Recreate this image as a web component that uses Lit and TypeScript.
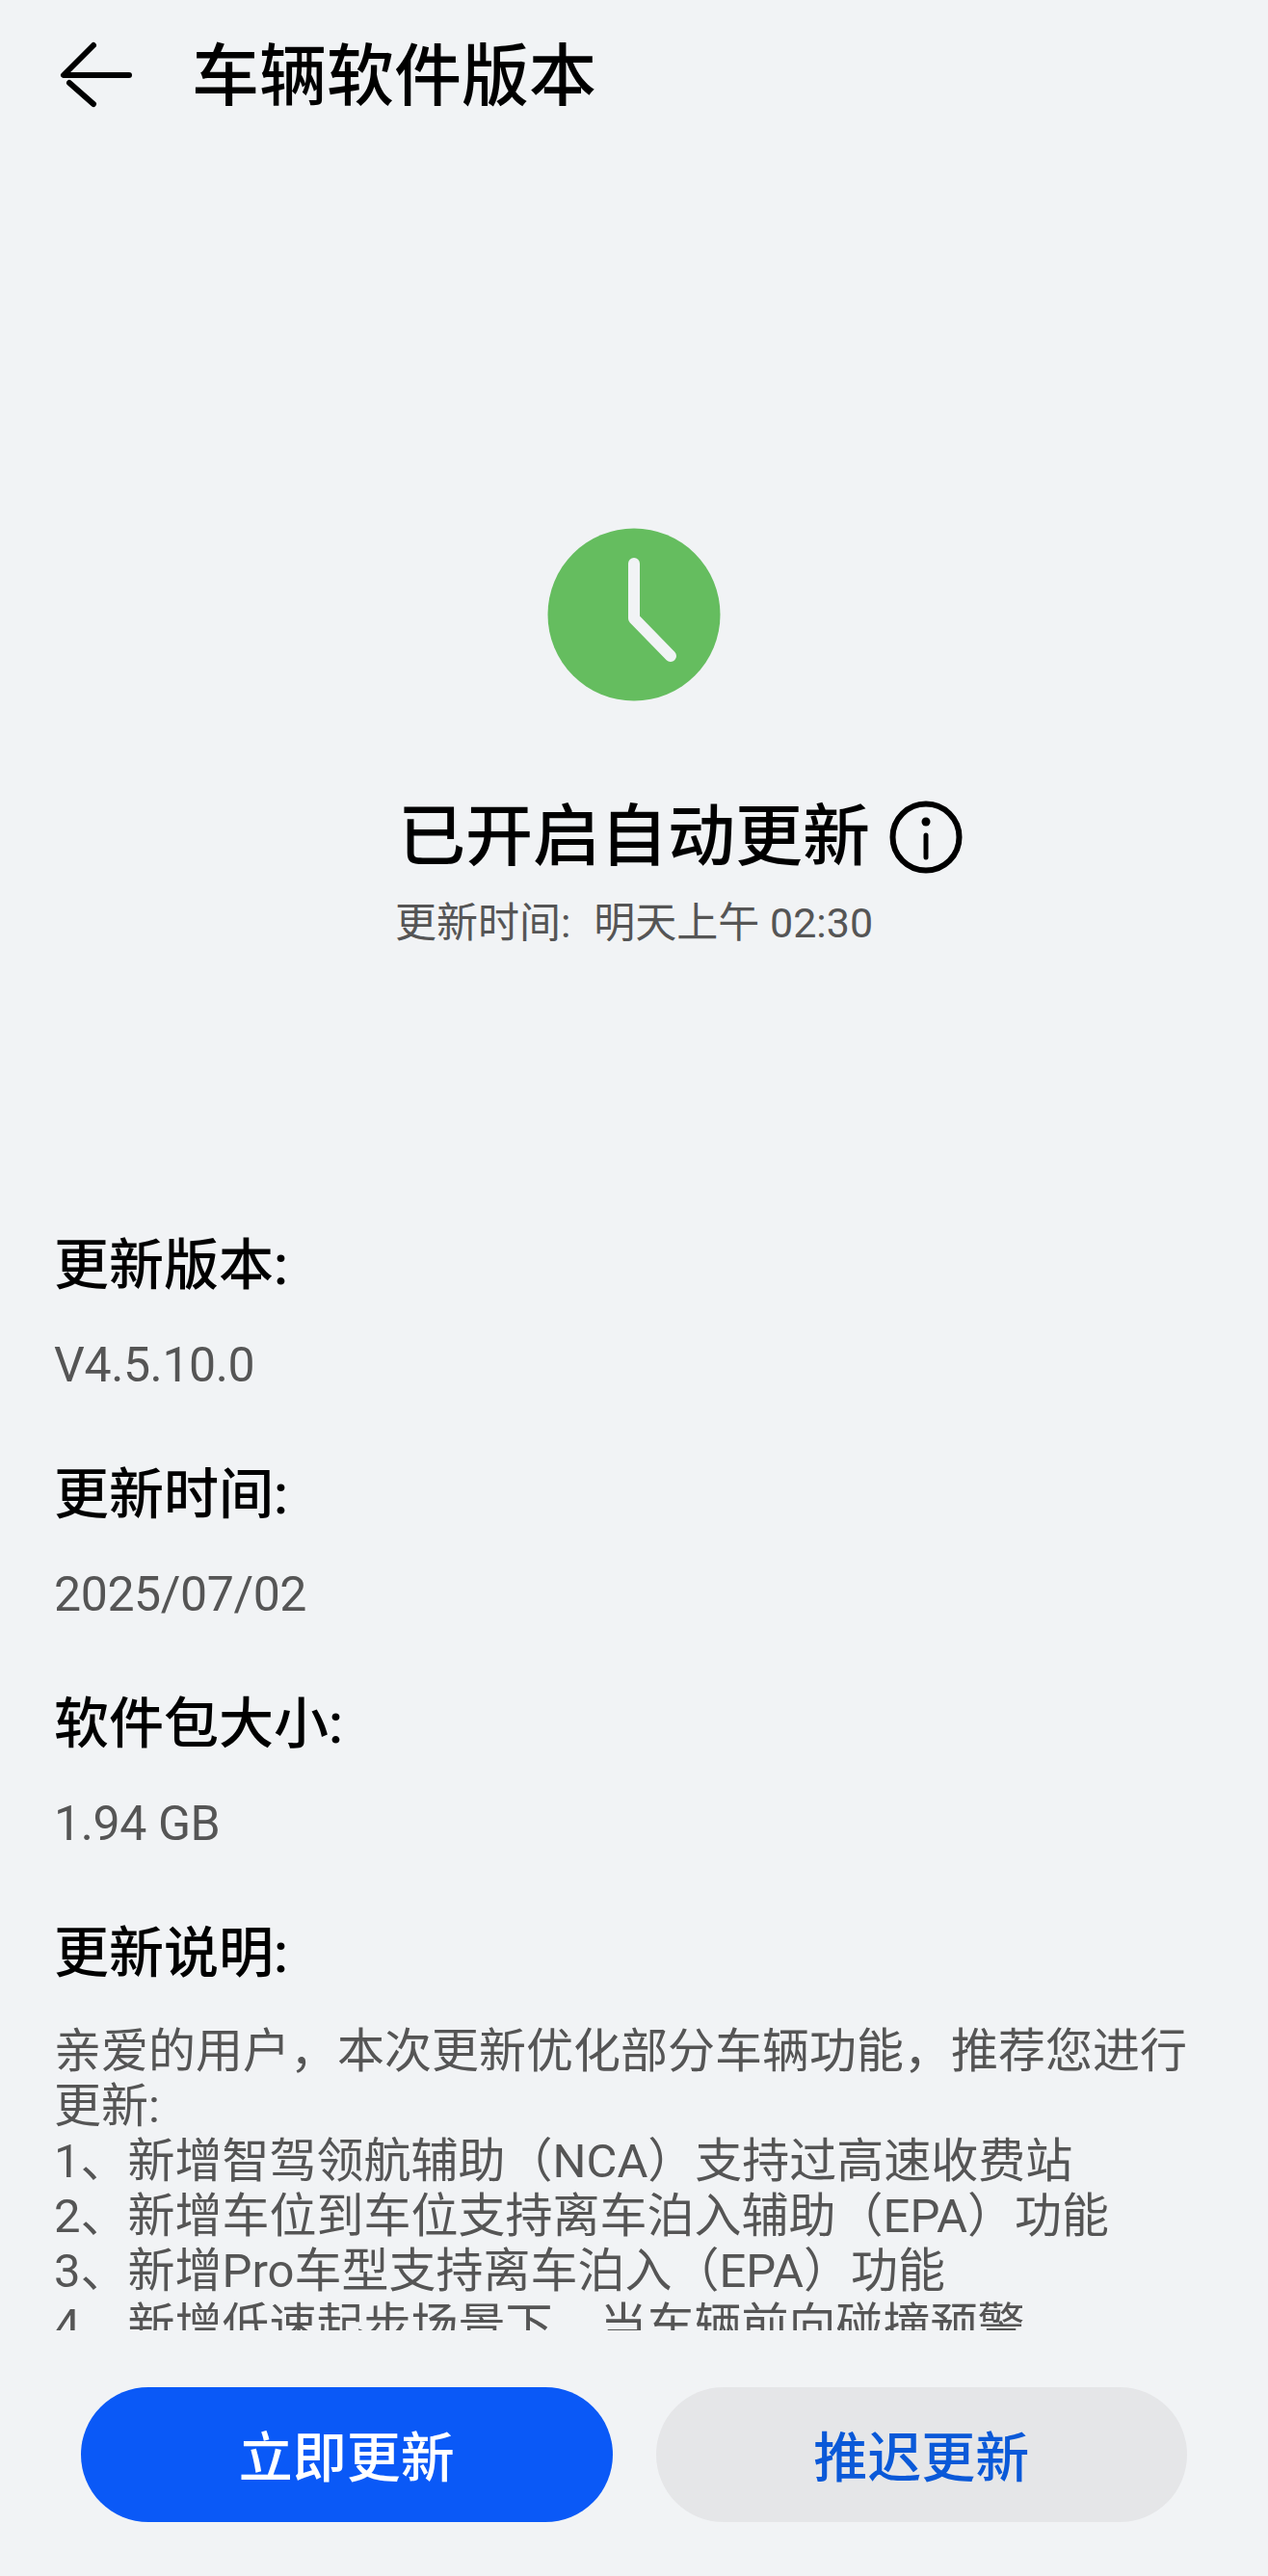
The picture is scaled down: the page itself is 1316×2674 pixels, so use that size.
import { LitElement, html, css, svg } from 'lit';
import { customElement } from 'lit/decorators.js';

const FONT = css`"Roboto", "Noto Sans CJK SC", sans-serif`;

const rows = [
  { label: '更新版本:', value: 'V4.5.10.0' },
  { label: '更新时间:', value: '2025/07/02' },
  { label: '软件包大小:', value: '1.94 GB' },
];

const notes = [
  '亲爱的用户，本次更新优化部分车辆功能，推荐您进行更新:',
  '1、新增智驾领航辅助（NCA）支持过高速收费站',
  '2、新增车位到车位支持离车泊入辅助（EPA）功能',
  '3、新增Pro车型支持离车泊入（EPA）功能',
  '4、新增低速起步场景下，当车辆前向碰撞预警',
];

const backIcon = svg`
  <path d="M97 47 L66 78 H134 M72 86 L97 108" transform="translate(-60 -40)" />
`;

@customElement('app-root')
export class AppRoot extends LitElement {
  static styles = css`
    :host {
      display: flex;
      flex-direction: column;
      height: 2674px;
      background: #f1f3f5;
      color: #000;
      font-family: ${FONT};
      overflow: hidden;
    }
    .header {
      display: flex;
      align-items: center;
      height: 156px;
      padding-left: 60px;
      flex: none;
    }
    .back {
      width: 80px;
      height: 76px;
      margin-right: 59px;
      fill: none;
      stroke: #000;
      stroke-width: 6;
      stroke-linecap: round;
      stroke-linejoin: round;
    }
    h1 {
      margin: 4px 0 0;
      font-size: 70px;
      line-height: 80px;
      font-weight: 500;
    }
    .hero {
      display: flex;
      flex-direction: column;
      align-items: center;
      padding-top: 392px;
      flex: none;
    }
    .clock {
      width: 180px;
      height: 180px;
      display: block;
    }
    .status {
      display: flex;
      align-items: center;
      gap: 20px;
      margin-top: 99px;
      font-size: 70px;
      line-height: 84px;
      font-weight: 500;
    }
    /* the icon hangs off the right so the title itself stays centred */
    .info {
      width: 76px;
      height: 76px;
      margin-right: -96px;
      fill: none;
      stroke: #000;
    }
    .when {
      margin-top: 19px;
      font-size: 43px;
      line-height: 56px;
      color: #555;
    }
    .when span {
      margin-right: 24px;
    }
    .details {
      height: 1145px;
      margin-top: 288px;
      padding: 0 60px 0 56px;
      overflow: hidden;
      flex: none;
    }
    .row {
      margin-bottom: 57px;
    }
    .label {
      font-size: 57px;
      line-height: 80px;
      font-weight: 500;
    }
    .value {
      margin-top: 25px;
      font-size: 50px;
      line-height: 76px;
      letter-spacing: -0.4px;
      color: #555;
    }
    .notes {
      margin-top: 33px;
      font-size: 49px;
      line-height: 57px;
      color: #555;
    }
    .actions {
      display: flex;
      gap: 45px;
      padding: 59px 84px 0;
    }
    button {
      flex: 1;
      height: 140px;
      padding: 0 0 4px;
      border: none;
      border-radius: 70px;
      font-family: inherit;
      font-size: 56px;
      font-weight: 500;
    }
    .primary {
      background: #0a59f7;
      color: #fff;
    }
    .secondary {
      background: #e5e6e8;
      color: #0a59d8;
    }
  `;

  render() {
    return html`
      <div class="header">
        <svg class="back" viewBox="0 0 80 76">${backIcon}</svg>
        <h1>车辆软件版本</h1>
      </div>
      <div class="hero">
        <svg class="clock" viewBox="0 0 180 180">
          <circle cx="90" cy="90" r="89.5" fill="#65bd5f" />
          <path d="M90 37 V94 L128 133" fill="none" stroke="#f1f3f5" stroke-width="12" stroke-linecap="round" stroke-linejoin="round" />
        </svg>
        <div class="status">
          <span>已开启自动更新</span>
          <svg class="info" viewBox="0 0 76 76">
            <circle cx="38" cy="38" r="34.5" stroke-width="6" />
            <circle cx="38" cy="22" r="4.5" fill="#000" stroke="none" />
            <path d="M38 36 V59" stroke-width="5" stroke-linecap="round" />
          </svg>
        </div>
        <div class="when"><span>更新时间:</span>明天上午 02:30</div>
      </div>
      <div class="details">
        ${rows.map(
          (r) => html`
            <div class="row">
              <div class="label">${r.label}</div>
              <div class="value">${r.value}</div>
            </div>
          `
        )}
        <div class="label">更新说明:</div>
        <div class="notes">${notes.map((n) => html`<div>${n}</div>`)}</div>
      </div>
      <div class="actions">
        <button class="primary">立即更新</button>
        <button class="secondary">推迟更新</button>
      </div>
    `;
  }
}
